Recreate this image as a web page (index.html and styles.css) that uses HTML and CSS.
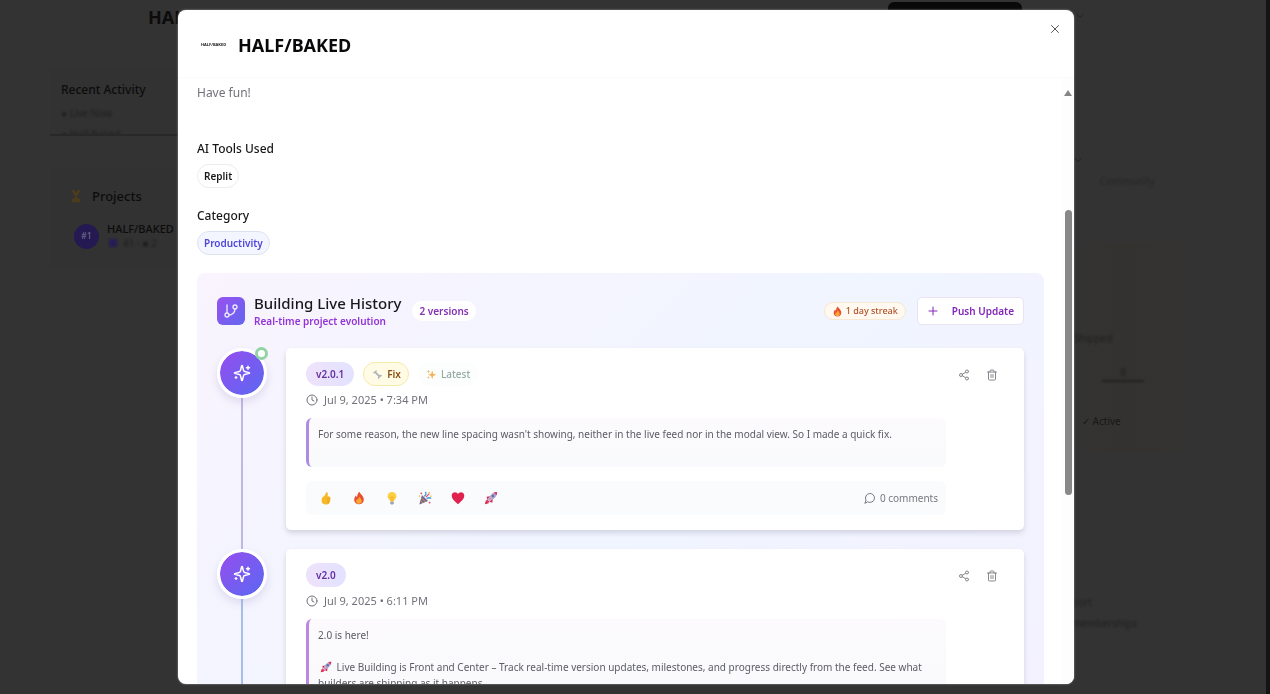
FILE: index.html
```html
<!DOCTYPE html>
<html lang="en">
<head>
<meta charset="utf-8">
<meta name="viewport" content="width=device-width, initial-scale=1">
<title>HALF/BAKED</title>
<link rel="stylesheet" href="styles.css">
</head>
<body>
<svg class="defs" aria-hidden="true">
  <symbol id="i-sparkles" viewBox="0 0 24 24"><path d="M9.94 15.5A2 2 0 0 0 8.5 14.06l-6.14-1.58a.5.5 0 0 1 0-.96L8.5 9.94A2 2 0 0 0 9.94 8.5l1.58-6.14a.5.5 0 0 1 .96 0L14.06 8.5A2 2 0 0 0 15.5 9.94l6.14 1.58a.5.5 0 0 1 0 .96L15.5 14.06a2 2 0 0 0-1.44 1.44l-1.58 6.14a.5.5 0 0 1-.96 0z"/><path d="M20 3v4M22 5h-4M4 17v2M5 18H3"/></symbol>
  <symbol id="i-clock" viewBox="0 0 24 24"><circle cx="12" cy="12" r="10"/><path d="M12 6v6l4 2"/></symbol>
  <symbol id="i-share" viewBox="0 0 24 24"><circle cx="18" cy="5" r="3"/><circle cx="6" cy="12" r="3"/><circle cx="18" cy="19" r="3"/><path d="m8.6 13.5 6.8 4M15.4 6.5l-6.8 4"/></symbol>
  <symbol id="i-trash" viewBox="0 0 24 24"><path d="M3 6h18M19 6v14a2 2 0 0 1-2 2H7a2 2 0 0 1-2-2V6M8 6V4a2 2 0 0 1 2-2h4a2 2 0 0 1 2 2v2M10 11v6M14 11v6"/></symbol>
  <symbol id="i-fire" viewBox="0 0 16 16"><path fill="#e8502e" d="M8.6.8c.4 2.600 4.900 4.500 4.900 9 0 3.300-2.300 5.400-5.500 5.400S2.500 13 2.500 10c0-2.200 1.200-3.600 2-4.800.3 1 .7 1.500 1.300 1.800C6 4.600 6.500 2.300 8.600.8z"/><path fill="#fba733" d="M8.600 6.500c.3 1.500 2.600 2.500 2.600 5 0 2-1.300 3.200-3.200 3.200s-3.300-1.200-3.300-3c0-1.300.6-2 1.200-2.700.3.600.6.800 1 1C7 8.700 7.400 7.400 8.600 6.500z"/></symbol>
  <symbol id="i-rocket" viewBox="0 0 16 16"><path fill="#d9264f" d="M3 6.500 7 6l-3 4zM10 9l-.5 4.500L6 12zM1 15l1.200-4.500L5.500 14z"/><path fill="#b9a6c6" d="M15 1c-4 0-7 2-9.500 6.500L4.500 10 6 11.500l2.500-1C13 8 15 5 15 1z"/><path fill="#e02f5c" d="M15 1c-1.500 0-2.700.2-3.900.7l3.200 3.200C14.800 3.700 15 2.500 15 1zM3.500 9.500l3 3-1.500 1-2.500-2.500z"/><circle cx="10.300" cy="5.700" r="1.600" fill="#5b74b8"/></symbol>
</svg>

<div class="page" aria-hidden="true">
  <header class="page-header"><strong class="brand">HALF/BAKED</strong><span class="header-btn"></span><svg class="icon ic-12 chev" viewBox="0 0 24 24"><path d="m6 9 6 6 6-6"/></svg></header>
  <div class="page-columns">
    <aside class="sidebar">
      <section class="activity">
        <h2>Recent Activity</h2>
        <p class="haze">● Live Now</p>
        <p class="haze">● Half Baked</p>
      </section>
      <section class="projects">
        <h2><svg class="ic-14" viewBox="0 0 16 16"><path fill="#4b3c1c" d="M3 1h3l2 3 2-3h3l-2 5-2 2 1 3h3v4H3v-4h3l1-3-2-2z"/></svg>Projects</h2>
        <div class="project"><span class="rank">#1</span><div><b>HALF/BAKED</b><p class="haze"><i class="mini"></i>41 · ■ 2</p></div></div>
      </section>
    </aside>
    <aside class="rail">
      <svg class="icon ic-12 rail-chev" viewBox="0 0 24 24"><path d="m6 9 6 6 6-6"/></svg>
      <p class="haze community">Community</p>
      <section class="stats">
        <p class="haze">Shipped</p>
        <p class="haze count">8</p>
        <p class="active">✓ Active</p>
      </section>
      <p class="haze support">port</p>
      <p class="haze">memberships</p>
    </aside>
  </div>
</div>

<div class="overlay">
  <div class="modal" role="dialog" aria-modal="true" aria-labelledby="title">
    <header class="modal-header">
      <span class="logo">HALF/BAKED</span>
      <h1 id="title">HALF/BAKED</h1>
      <button class="icon-btn close" aria-label="Close"><svg class="icon ic-12" viewBox="0 0 24 24"><path d="M19 5 5 19M5 5l14 14"/></svg></button>
    </header>
    <div class="modal-body">
      <div class="content">
        <p class="lead">Have fun!</p>
        <section class="field"><h3>AI Tools Used</h3><span class="chip">Replit</span></section>
        <section class="field"><h3>Category</h3><span class="chip chip-category">Productivity</span></section>

        <section class="history">
          <header class="history-header">
            <span class="history-icon"><svg class="icon ic-16" viewBox="0 0 24 24"><path d="M6 3v12"/><circle cx="18" cy="6" r="3"/><circle cx="6" cy="18" r="3"/><path d="M18 9a9 9 0 0 1-9 9"/></svg></span>
            <div><h2>Building Live History</h2><p class="subtitle">Real-time project evolution</p></div>
            <span class="versions">2 versions</span>
            <span class="streak"><svg class="ic-11"><use href="#i-fire"/></svg>1 day streak</span>
            <button class="push"><svg class="icon ic-12" viewBox="0 0 24 24"><path d="M4 12h16M12 4v16"/></svg>Push Update</button>
          </header>

          <ol class="timeline">
            <li class="entry">
              <div class="marker"><span class="node"><svg class="icon ic-18"><use href="#i-sparkles"/></svg><i class="live"></i></span><span class="line"></span></div>
              <article class="card">
                <div class="card-main">
                  <div class="tags"><span class="tag tag-version">v2.0.1</span><span class="tag tag-fix"><svg class="ic-11" viewBox="0 0 16 16"><path d="m4.500 4.500 7 7" stroke="#aab2bd" stroke-width="2.500"/><path d="M2 5a3 3 0 0 0 4-3M10 14a3 3 0 0 1 4-4" fill="none" stroke="#aab2bd" stroke-width="2.200"/></svg>Fix</span><span class="tag tag-latest"><svg class="ic-11" viewBox="0 0 16 16"><path fill="#f5b35c" d="m9 2 1.500 5L15 8.500 10.500 10 9 15l-1.500-5L3 8.500 7.500 7zM3.500 1l.7 2 1.800.7-1.800.7-.7 2-.7-2L1 3.700 2.800 3zM3.500 10l.6 1.700 1.500.6-1.500.6-.6 1.700-.6-1.700-1.500-.6 1.500-.6z"/></svg>Latest</span></div>
                  <time class="time"><svg class="icon ic-12"><use href="#i-clock"/></svg>Jul 9, 2025 • 7:34 PM</time>
                  <div class="message">For some reason, the new line spacing wasn't showing, neither in the live feed nor in the modal view. So I made a quick fix.</div>
                  <footer class="reactions">
                    <button class="icon-btn" aria-label="Like"><svg class="ic-14" viewBox="0 0 16 16"><path fill="#f7b928" d="M8.500 1c1.500.2 1.800 1.500 1.600 3L9.800 6c2 0 3.400.7 3.400 2.300 0 .6-.2 1-.4 1.300.3.800.2 1.500-.3 2 .1.900-.2 1.500-.7 1.900 0 1.300-1.200 1.900-3.300 1.900-3.800 0-5.500-1-5.500-4.500C3 8 4 7 5.500 6 7 4.800 7.500 3 8.500 1z"/><path stroke="#e08a1c" fill="none" stroke-width=".6" d="M9 8.800h3.500M9.300 11.200h3M9.300 13.300h2.200"/></svg></button>
                    <button class="icon-btn" aria-label="Fire"><svg class="ic-14"><use href="#i-fire"/></svg></button>
                    <button class="icon-btn" aria-label="Idea"><svg class="ic-14" viewBox="0 0 16 16"><path fill="#fbcf3f" d="M8 1a5 5 0 0 0-3 9c.7.600 1 1.200 1 2h4c0-.8.3-1.400 1-2a5 5 0 0 0-3-9z"/><path stroke="#f09a28" fill="none" stroke-width=".7" d="M6.500 7 7.300 12M9.500 7l-.8 5M6.500 7h3"/><path fill="#9ba3ae" d="M6 12.300h4V14l-1 1.500H7L6 14z"/></svg></button>
                    <button class="icon-btn" aria-label="Celebrate"><svg class="ic-14" viewBox="0 0 16 16"><path fill="#75658f" d="m4.500 4.500 7 7L1.500 15.500z"/><path stroke="#e4a23c" d="m4 8 4.500 4.500M3 11l2.500 2.500"/><path fill="none" stroke="#3a9ad1" stroke-width="1.500" d="M7 6c2-1 2.500-3 1.500-5M10 9c1.500-1.500 3.500-1.500 5-.5"/><path fill="none" stroke="#e2487c" stroke-width="1.500" d="m9 7 4-4M3 2l1.500 1.500M12.500 12.500 14 14"/><path fill="#f0b429" d="M12 1h1.500v1.500H12zM14 5h1.500v1.500H14zM1 5h1.500v1.500H1z"/></svg></button>
                    <button class="icon-btn" aria-label="Love"><svg class="ic-14" viewBox="0 0 16 16"><path fill="#e0234e" d="M8 15C4 12 .8 9 .8 5.500.8 3 2.400 1.500 4.500 1.500 6 1.500 7.300 2.300 8 3.500c.7-1.200 2-2 3.500-2 2.100 0 3.700 1.500 3.700 4C15.200 9 12 12 8 15z"/></svg></button>
                    <button class="icon-btn" aria-label="Ship"><svg class="ic-14"><use href="#i-rocket"/></svg></button>
                    <button class="comments"><svg class="icon ic-12" viewBox="0 0 24 24"><path d="M7.900 20A9 9 0 1 0 4 16.100L2 22z"/></svg>0 comments</button>
                  </footer>
                </div>
                <div class="actions"><button class="icon-btn" aria-label="Share"><svg class="icon ic-12"><use href="#i-share"/></svg></button><button class="icon-btn" aria-label="Delete"><svg class="icon ic-12"><use href="#i-trash"/></svg></button></div>
              </article>
            </li>
            <li class="entry entry-blue">
              <div class="marker"><span class="node"><svg class="icon ic-18"><use href="#i-sparkles"/></svg></span><span class="line"></span></div>
              <article class="card">
                <div class="card-main">
                  <div class="tags"><span class="tag tag-version">v2.0</span></div>
                  <time class="time"><svg class="icon ic-12"><use href="#i-clock"/></svg>Jul 9, 2025 • 6:11 PM</time>
                  <div class="message"><p>2.0 is here!</p><p class="para"><svg class="ic-12 inline-emoji" role="img" aria-label="Rocket"><use href="#i-rocket"/></svg> Live Building is Front and Center – Track real-time version updates, milestones, and progress directly from the feed. See what builders are shipping as it happens.</p></div>
                </div>
                <div class="actions"><button class="icon-btn" aria-label="Share"><svg class="icon ic-12"><use href="#i-share"/></svg></button><button class="icon-btn" aria-label="Delete"><svg class="icon ic-12"><use href="#i-trash"/></svg></button></div>
              </article>
            </li>
          </ol>
        </section>
      </div>
      <div class="scrollbar" aria-hidden="true"><span class="arrow"></span><span class="thumb"></span></div>
    </div>
  </div>
</div>
</body>
</html>
```

FILE: styles.css
```css
* { box-sizing: border-box; }
html, body { height: 100%; }
body {
  margin: 0;
  overflow: hidden;
  background: #333;
  border-right: 4px solid #141414;
  font: 11px/16px "Segoe UI", "Noto Sans", "Open Sans", sans-serif;
  color: #18181b;
}
h1, h2, h3, p, ol { margin: 0; padding: 0; }
button { font: inherit; color: inherit; background: none; border: 0; padding: 0; }
.defs { position: absolute; width: 0; height: 0; }

.icon { fill: none; stroke: currentColor; stroke-width: 2; stroke-linecap: round; stroke-linejoin: round; }
.ic-11 { width: 11px; height: 11px; flex: none; }
.ic-12 { width: 12px; height: 12px; flex: none; }
.ic-14 { width: 14px; height: 14px; flex: none; }
.ic-16 { width: 16px; height: 16px; flex: none; }
.ic-18 { width: 18px; height: 18px; flex: none; }
.icon-btn { display: inline-flex; align-items: center; justify-content: center; }

/* Dimmed page behind the dialog */
.page { color: #0c0c0c; }
.page-header { display: flex; align-items: flex-start; height: 68px; padding: 1px 180px 0 148px; }
.brand { font-size: 18px; line-height: 32px; flex: 1; }
.header-btn { width: 134px; height: 16px; margin-top: 1px; border-radius: 6px; background: #090909; }
.chev { margin: 9px 0 0 52px; color: #202020; }
.page-columns { display: flex; justify-content: space-between; padding: 0 66px 0 50px; }
.sidebar { width: 220px; }
.activity { height: 68px; padding: 12px 11px 0; border-bottom: 2px solid #282828; background: #323232; overflow: hidden; }
.sidebar h2 { display: flex; align-items: center; gap: 9px; font-size: 12px; line-height: 20px; font-weight: 500; }
.haze { color: #1f1f1f; font-size: 10px; filter: blur(1px); }
.activity .haze { margin-top: 5px; }
.projects { margin-top: 32px; padding: 18px 19px; background: #323232; }
.sidebar .projects h2 { font-size: 13px; }
.project { display: flex; align-items: center; gap: 8px; padding: 16px 0 0 5px; line-height: 14px; }
.project b { font-weight: 500; }
.rank { display: grid; place-items: center; width: 25px; height: 25px; border-radius: 50%; background: #251952; color: #77728a; font-size: 9px; }
.mini { display: inline-block; width: 8px; height: 8px; margin: 0 6px 0 2px; background: #281c55; }
.rail { width: 128px; padding-top: 86px; }
.rail-chev { display: block; margin-bottom: 7px; color: #202020; }
.community { padding-left: 28px; color: #262626; }
.stats { height: 210px; margin: 53px 0 142px; padding: 88px 0 0 2px; background: linear-gradient(90deg, #333, #34322f 40%, #333); }
.count { margin: 18px 56px 0 28px; text-align: center; border-bottom: 2px solid #222; }
.active { margin: 31px 0 0 8px; font-size: 10px; color: #171717; }
.support { margin-bottom: 5px; }

/* Dialog */
.overlay { position: fixed; inset: 0; display: flex; justify-content: center; padding: 10px 18px 10px 0; }
.modal { display: flex; flex-direction: column; width: 100%; max-width: 896px; border-radius: 8px; overflow: hidden; background: #fff; box-shadow: 0 0 2px #aaa; }
.modal-header { display: flex; align-items: center; gap: 13px; flex: none; height: 68px; padding: 3px 13px 0 23px; border-bottom: 1px solid #fafafb; }
.logo { width: 24px; font-size: 4px; line-height: 8px; font-weight: 700; }
.modal-header h1 { flex: 1; font-size: 18px; line-height: 28px; font-weight: 700; color: #09090b; }
.close { align-self: flex-start; width: 12px; height: 12px; margin-top: 10px; color: #555; }
.modal-body { display: flex; flex: 1; min-height: 0; }
.content { flex: 1; min-width: 0; padding: 7px 18px 0 19px; overflow: hidden; }
.lead { margin-bottom: 40px; font-size: 12px; color: #71717a; }
.field { margin-bottom: 20px; }
.field + .field { margin-bottom: 18px; }
.field h3 { margin-bottom: 7px; font-size: 12px; line-height: 16px; font-weight: 500; }
.chip { display: table; padding: 3px 6px; border: 1px solid #ececee; border-radius: 12px; font-size: 10px; font-weight: 600; }
.chip-category { background: #f3f6ff; border-color: #dbe2f0; color: #5145dc; }

.scrollbar { display: flex; flex-direction: column; align-items: center; flex: none; width: 12px; padding-top: 12px; background: #fdfdfd; }
.arrow { border: 4px solid transparent; border-top: 0; border-bottom: 6px solid #858585; }
.thumb { width: 7px; height: 48%; margin-top: 114px; border-radius: 4px; background: #888; }

.history { padding: 24px 20px; border-radius: 8px; background: linear-gradient(135deg, #f9f4fe, #f0f5ff 50%, #f4f1ff); }
.history-header { display: flex; align-items: center; height: 28px; margin-bottom: 23px; }
.history-icon { display: grid; place-items: center; width: 28px; height: 28px; margin-right: 9px; border-radius: 6px; background: linear-gradient(135deg, #9851ef, #6267ef); color: #eee7ff; }
.history h2 { font-size: 15px; line-height: 20px; font-weight: 500; }
.subtitle { font-size: 10px; font-weight: 600; color: #9333d8; }
.versions { margin: 0 auto 0 11px; padding: 2px 7px; border-radius: 10px; background: #fff; color: #8431b4; font-size: 10px; font-weight: 600; }
.streak { display: flex; align-items: center; gap: 3px; margin-right: 11px; padding: 0 7px; border: 1px solid #f8e7d2; border-radius: 9px; background: #fff9ef; color: #b4532a; font-size: 9px; font-weight: 500; }
.push { display: flex; align-items: center; gap: 13px; height: 28px; padding: 0 9px; border: 1px solid #e9e3f5; border-radius: 5px; background: #fff; color: #8427b9; font-size: 10px; font-weight: 600; }

.timeline { list-style: none; }
.entry { display: flex; gap: 19px; }
.marker { display: flex; flex-direction: column; align-items: center; flex: none; width: 50px; }
.node { position: relative; display: grid; place-items: center; flex: none; width: 50px; height: 50px; border: 3px solid #fff; border-radius: 50%; background: linear-gradient(135deg, #9a4bee, #566bf2) border-box; background-clip: padding-box; color: #fff; box-shadow: 0 4px 8px #7c6fb033; }
.live { position: absolute; top: -4px; right: -4px; width: 13px; height: 13px; border: 3px solid #92d3a5; border-radius: 50%; background: #fff; }
.line { flex: 1; width: 2px; background: #c0b8e2; }
.entry-blue .line { background: #a7bfe8; }
.card { display: flex; align-items: flex-start; flex: 1; min-width: 0; margin-bottom: 19px; padding: 14px 20px 15px; border-radius: 5px; background: #fff; box-shadow: 0 3px 5px #55557033; }
.card-main { flex: 1; min-width: 0; }
.tags { display: flex; gap: 9px; }
.tag { display: flex; align-items: center; gap: 4px; height: 24px; padding: 0 9px; border: 1px solid transparent; border-radius: 12px; font-size: 10px; font-weight: 600; }
.tag-version { background: linear-gradient(90deg, #efe2fb, #e2e2ff); color: #6630a0; }
.tag-fix { padding: 0 7px 0 8px; background: #fffbe5; border-color: #f6eaa9; color: #895016; }
.tag-latest { padding: 0 7px; background: #fbfefc; color: #95aaa2; font-weight: 500; }
.time { display: flex; align-items: center; gap: 6px; height: 16px; margin: 6px 0 10px; color: #71717a; }
.message { min-height: 49px; padding: 8px 8px 8px 9px; border-left: 3px solid #af8ce3; border-radius: 6px; background: linear-gradient(#fcfafd, #f9fafc); color: #5c5c66; font-size: 10px; }
.entry-blue .message { border-color: #bd86e3; }
.para { margin-top: 16px; }
.inline-emoji { vertical-align: -2px; margin: 0 2px; }
.reactions { display: flex; align-items: center; gap: 19px; height: 34px; margin-top: 14px; padding: 0 8px 0 13px; border-radius: 6px; background: #fafbfc; }
.comments { display: flex; align-items: center; gap: 4px; margin-left: auto; color: #777780; font-size: 10px; }
.actions { display: flex; gap: 16px; flex: none; width: 58px; margin: 7px 0 0; padding-left: 12px; color: #88888f; }
```
